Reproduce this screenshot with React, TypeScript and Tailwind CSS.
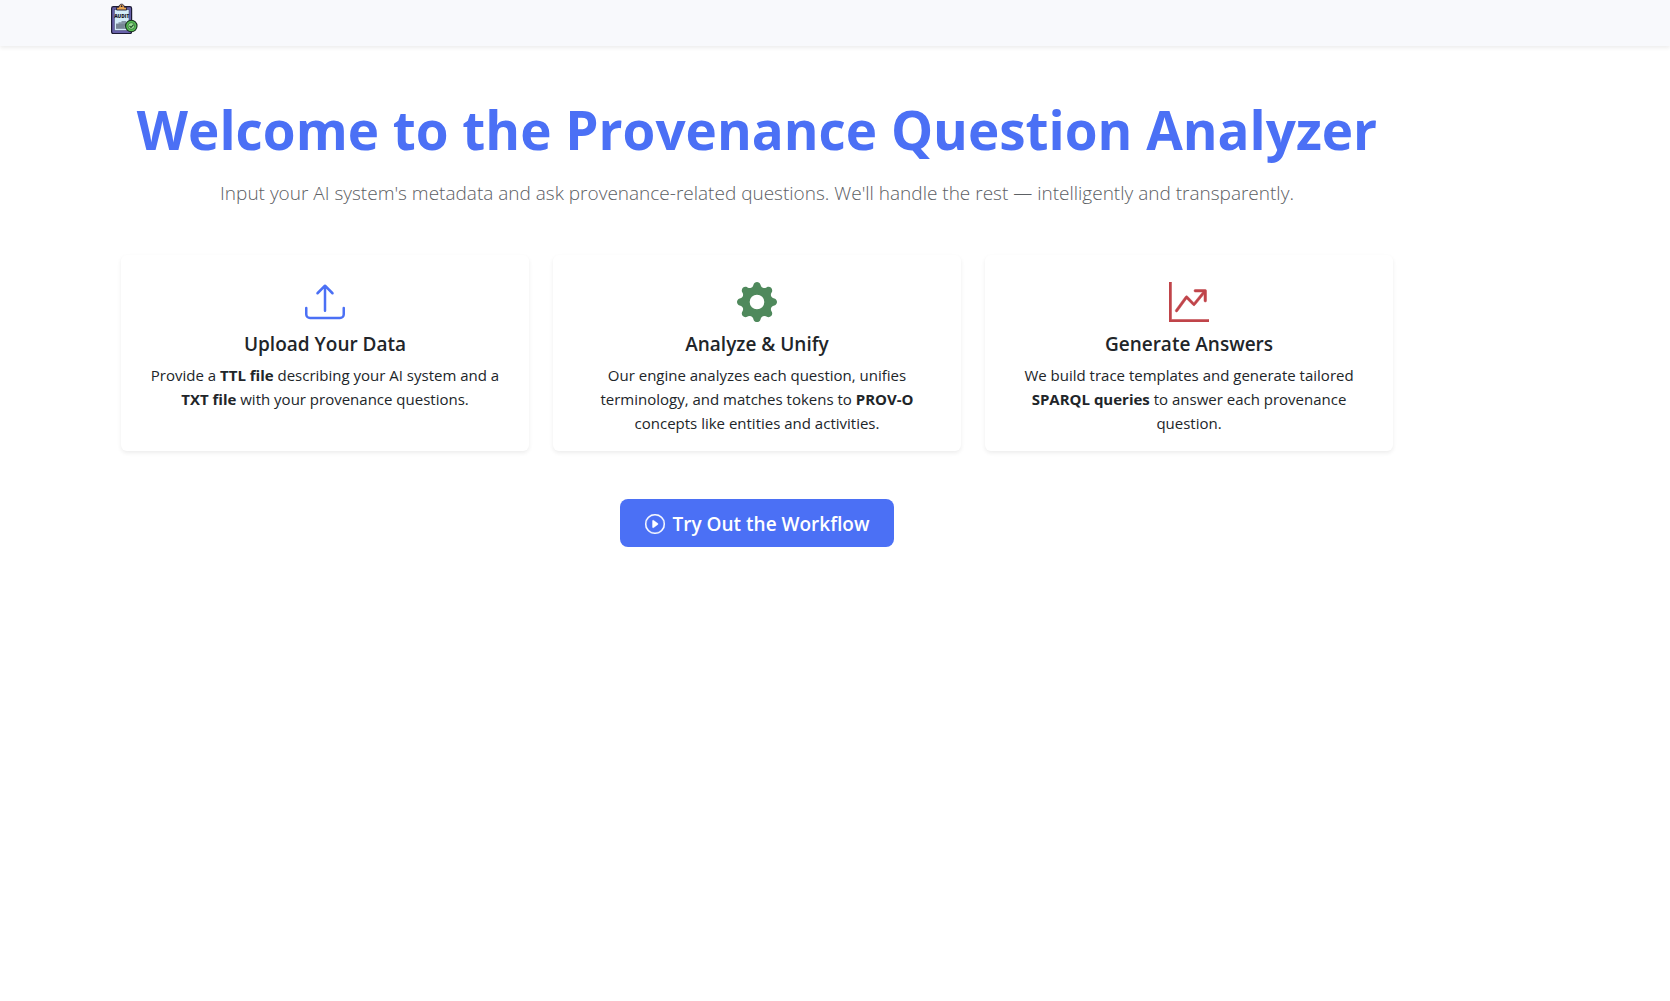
import type { ReactNode } from "react";
import { BsGearFill, BsGraphUpArrow, BsPlayCircle, BsUpload } from "react-icons/bs";

function AuditLogo() {
  return (
    <svg viewBox="0 0 32 32" className="block size-8" role="img" aria-label="Audit">
      <rect x="2.6" y="4.6" width="20" height="27" rx="1.8" fill="#6660a8" stroke="#1c1a33" strokeWidth="1.2" />
      <rect x="5.4" y="7.6" width="14.6" height="21" fill="#d3ecf8" stroke="#3a3866" strokeWidth="0.5" />
      <path d="M7.6 5.2h2.2c.3-2 1.3-3 2.800-3s2.500 1 2.800 3h2.200v2.800H7.600z" fill="#e8a552" stroke="#1c1a33" strokeWidth="0.9" strokeLinejoin="round" />
      <circle cx="12.600" cy="4.200" r="0.900" fill="#1c1a33" />
      <text x="12.700" y="16.400" textAnchor="middle" fontSize="4.800" fill="#14131f" className="font-['Open_Sans',sans-serif] font-extrabold">
        AUDIT
      </text>
      <path d="M7 21.500h2.500v-1.200h3v-1.200H17V27H7z" fill="#8595a5" />
      <path d="M7 23h9M7 25h8" stroke="#5c6a79" strokeWidth="0.700" />
      <circle cx="22.300" cy="24" r="5.700" fill="#55bd52" stroke="#16301c" strokeWidth="1.100" />
      <circle cx="22.300" cy="24" r="3.300" fill="#9be192" stroke="#24552c" strokeWidth="0.600" />
      <path d="M20.500 23.800l1.500 1.600 2.600-2.700" fill="none" stroke="#1c4a26" strokeWidth="1.100" />
    </svg>
  );
}

function FeatureCard({ icon, title, children }: { icon: ReactNode; title: string; children: ReactNode }) {
  return (
    <article className="rounded-md bg-white p-4 text-center shadow-[0_2px_4px_rgba(0,0,0,0.075)]">
      <div className="flex h-[61px] items-center justify-center pt-px text-[40px]">{icon}</div>
      <h2 className="mb-[7px] text-[19px] leading-6 font-semibold">{title}</h2>
      <p className="text-[15px] leading-6">{children}</p>
    </article>
  );
}

export default function App() {
  return (
    <div className="min-h-screen bg-white font-['Open_Sans',sans-serif] text-[#212529]">
      <header className="bg-[#f8f9fc] pr-[156px] shadow-[0_2px_4px_rgba(0,0,0,0.075)]">
        <nav className="mx-auto flex max-w-[1320px] px-3 pt-0.5 pb-3">
          <a href="#home">
            <AuditLogo />
          </a>
        </nav>
      </header>

      <div className="pr-[156px]">
        <main className="mx-auto max-w-[1320px] px-6 py-12">
          <div className="mb-[47px] text-center">
            <h1 className="mb-3 text-[53px] leading-[72px] font-bold text-[#4b70f5]">
              Welcome to the Provenance Question Analyzer
            </h1>
            <p className="text-[19px] leading-[30px] font-light text-[#5c6064]">
              Input your AI system's metadata and ask provenance-related questions. We'll handle the rest — intelligently
              and transparently.
            </p>
          </div>

          <section className="grid grid-cols-3 gap-6">
            <FeatureCard icon={<BsUpload className="text-[#4b70f5]" />} title="Upload Your Data">
              Provide a <strong>TTL file</strong> describing your AI system and a <strong>TXT file</strong> with your
              provenance questions.
            </FeatureCard>
            <FeatureCard icon={<BsGearFill className="text-[#4f895c]" />} title="Analyze & Unify">
              Our engine analyzes each question, unifies terminology, and matches tokens to <strong>PROV-O</strong>{" "}
              concepts like entities and activities.
            </FeatureCard>
            <FeatureCard
              icon={<BsGraphUpArrow className="stroke-current stroke-[0.2] text-[#c0444a]" />}
              title="Generate Answers"
            >
              We build trace templates and generate tailored <strong>SPARQL queries</strong> to answer each provenance
              question.
            </FeatureCard>
          </section>

          <div className="mt-12 flex justify-center">
            <button
              type="button"
              className="flex h-12 cursor-pointer items-center gap-2 rounded-lg bg-[#4b70f5] px-[25px] pt-0.5 text-[19px] font-semibold text-white"
            >
              <BsPlayCircle className="size-5 stroke-current stroke-[0.3]" />
              Try Out the Workflow
            </button>
          </div>
        </main>
      </div>
    </div>
  );
}
